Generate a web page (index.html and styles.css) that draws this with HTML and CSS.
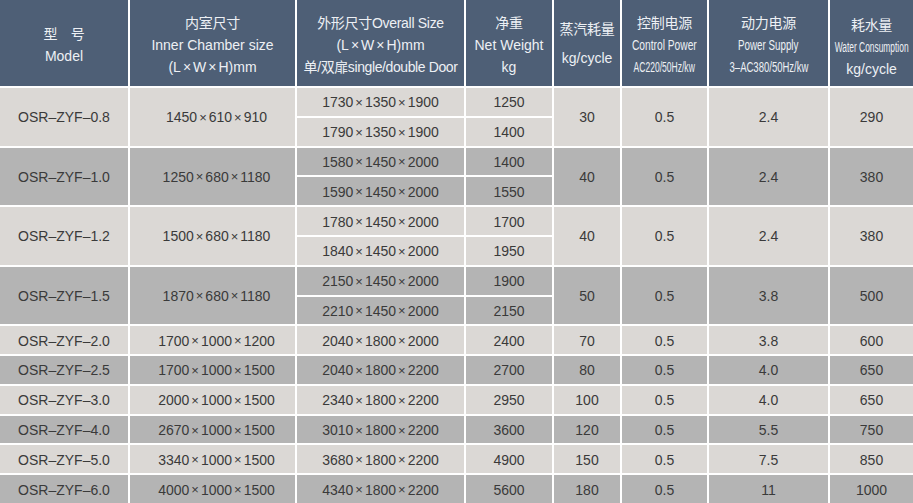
FILE: index.html
```html
<!DOCTYPE html>
<html lang="zh-CN">
<head>
<meta charset="utf-8">
<title>OSR-ZYF 规格参数</title>
<link rel="stylesheet" href="styles.css">
</head>
<body>
<div class="spec">
  <div class="th"><span class="zh">型　号</span><span>Model</span></div>
  <div class="th"><span class="zh">内室尺寸</span><span>Inner Chamber size</span><span>(L<span class="hx">×</span>W<span class="hx">×</span>H)mm</span></div>
  <div class="th"><span class="zh">外形尺寸Overall Size</span><span>(L<span class="hx">×</span>W<span class="hx">×</span>H)mm</span><span class="nw">单/双扉single/double Door</span></div>
  <div class="th"><span class="zh">净重</span><span>Net Weight</span><span>kg</span></div>
  <div class="th th-wide"><span class="zh">蒸汽耗量</span><span>kg/cycle</span></div>
  <div class="th"><span class="zh">控制电源</span><span class="cond c-cp">Control Power</span><span class="cond c-ac">AC220/50Hz/kw</span></div>
  <div class="th"><span class="zh">动力电源</span><span class="cond c-ps">Power Supply</span><span class="cond c-3ac">3–AC380/50Hz/kw</span></div>
  <div class="th th-low"><span class="zh">耗水量</span><span class="cond c-wc">Water Consumption</span><span>kg/cycle</span></div>

  <!-- OSR-ZYF-0.8 -->
  <div class="td light span2">OSR–ZYF–0.8</div>
  <div class="td light span2 inner">1450<span class="x">×</span>610<span class="x">×</span>910</div>
  <div class="td light">1730<span class="x">×</span>1350<span class="x">×</span>1900</div>
  <div class="td light">1250</div>
  <div class="td light span2">30</div>
  <div class="td light span2">0.5</div>
  <div class="td light span2">2.4</div>
  <div class="td light span2">290</div>
  <div class="td light">1790<span class="x">×</span>1350<span class="x">×</span>1900</div>
  <div class="td light">1400</div>

  <!-- OSR-ZYF-1.0 -->
  <div class="td dark span2">OSR–ZYF–1.0</div>
  <div class="td dark span2 inner">1250<span class="x">×</span>680<span class="x">×</span>1180</div>
  <div class="td dark">1580<span class="x">×</span>1450<span class="x">×</span>2000</div>
  <div class="td dark">1400</div>
  <div class="td dark span2">40</div>
  <div class="td dark span2">0.5</div>
  <div class="td dark span2">2.4</div>
  <div class="td dark span2">380</div>
  <div class="td dark">1590<span class="x">×</span>1450<span class="x">×</span>2000</div>
  <div class="td dark">1550</div>

  <!-- OSR-ZYF-1.2 -->
  <div class="td light span2">OSR–ZYF–1.2</div>
  <div class="td light span2 inner">1500<span class="x">×</span>680<span class="x">×</span>1180</div>
  <div class="td light">1780<span class="x">×</span>1450<span class="x">×</span>2000</div>
  <div class="td light">1700</div>
  <div class="td light span2">40</div>
  <div class="td light span2">0.5</div>
  <div class="td light span2">2.4</div>
  <div class="td light span2">380</div>
  <div class="td light">1840<span class="x">×</span>1450<span class="x">×</span>2000</div>
  <div class="td light">1950</div>

  <!-- OSR-ZYF-1.5 -->
  <div class="td dark span2">OSR–ZYF–1.5</div>
  <div class="td dark span2 inner">1870<span class="x">×</span>680<span class="x">×</span>1180</div>
  <div class="td dark">2150<span class="x">×</span>1450<span class="x">×</span>2000</div>
  <div class="td dark">1900</div>
  <div class="td dark span2">50</div>
  <div class="td dark span2">0.5</div>
  <div class="td dark span2">3.8</div>
  <div class="td dark span2">500</div>
  <div class="td dark">2210<span class="x">×</span>1450<span class="x">×</span>2000</div>
  <div class="td dark">2150</div>

  <!-- OSR-ZYF-2.0 -->
  <div class="td light">OSR–ZYF–2.0</div>
  <div class="td light inner">1700<span class="x">×</span>1000<span class="x">×</span>1200</div>
  <div class="td light">2040<span class="x">×</span>1800<span class="x">×</span>2000</div>
  <div class="td light">2400</div>
  <div class="td light">70</div>
  <div class="td light">0.5</div>
  <div class="td light">3.8</div>
  <div class="td light">600</div>

  <!-- OSR-ZYF-2.5 -->
  <div class="td dark">OSR–ZYF–2.5</div>
  <div class="td dark inner">1700<span class="x">×</span>1000<span class="x">×</span>1500</div>
  <div class="td dark">2040<span class="x">×</span>1800<span class="x">×</span>2200</div>
  <div class="td dark">2700</div>
  <div class="td dark">80</div>
  <div class="td dark">0.5</div>
  <div class="td dark">4.0</div>
  <div class="td dark">650</div>

  <!-- OSR-ZYF-3.0 -->
  <div class="td light">OSR–ZYF–3.0</div>
  <div class="td light inner">2000<span class="x">×</span>1000<span class="x">×</span>1500</div>
  <div class="td light">2340<span class="x">×</span>1800<span class="x">×</span>2200</div>
  <div class="td light">2950</div>
  <div class="td light">100</div>
  <div class="td light">0.5</div>
  <div class="td light">4.0</div>
  <div class="td light">650</div>

  <!-- OSR-ZYF-4.0 -->
  <div class="td dark">OSR–ZYF–4.0</div>
  <div class="td dark inner">2670<span class="x">×</span>1000<span class="x">×</span>1500</div>
  <div class="td dark">3010<span class="x">×</span>1800<span class="x">×</span>2200</div>
  <div class="td dark">3600</div>
  <div class="td dark">120</div>
  <div class="td dark">0.5</div>
  <div class="td dark">5.5</div>
  <div class="td dark">750</div>

  <!-- OSR-ZYF-5.0 -->
  <div class="td light">OSR–ZYF–5.0</div>
  <div class="td light inner">3340<span class="x">×</span>1000<span class="x">×</span>1500</div>
  <div class="td light">3680<span class="x">×</span>1800<span class="x">×</span>2200</div>
  <div class="td light">4900</div>
  <div class="td light">150</div>
  <div class="td light">0.5</div>
  <div class="td light">7.5</div>
  <div class="td light">850</div>

  <!-- OSR-ZYF-6.0 -->
  <div class="td dark">OSR–ZYF–6.0</div>
  <div class="td dark inner">4000<span class="x">×</span>1000<span class="x">×</span>1500</div>
  <div class="td dark">4340<span class="x">×</span>1800<span class="x">×</span>2200</div>
  <div class="td dark">5600</div>
  <div class="td dark">180</div>
  <div class="td dark">0.5</div>
  <div class="td dark">11</div>
  <div class="td dark">1000</div>
</div>
</body>
</html>
```
FILE: styles.css
```css
html, body {
  margin: 0;
  padding: 0;
  background: #ffffff;
  overflow: hidden;
}

.spec {
  display: grid;
  grid-template-columns: 128px 165px 167px 86px 66px 85px 119px 83px;
  grid-template-rows: 86px repeat(14, 1fr);
  gap: 2px;
  width: 913px;
  height: 503px;
  background: #ffffff;
  font-family: "Liberation Sans", Arial, "Noto Sans CJK SC", sans-serif;
  font-size: 14px;
  color: #3a3a3a;
}

.th {
  background: #4e5f76;
  color: #edf0f4;
  display: flex;
  flex-direction: column;
  align-items: center;
  justify-content: center;
  line-height: 22px;
  white-space: nowrap;
  padding-top: 3px;
  box-sizing: border-box;
}

.th-wide {
  gap: 7px;
  padding-top: 0;
}

.th-low {
  padding-top: 8px;
}

.zh {
  font-family: "Liberation Sans", "Noto Sans CJK SC", sans-serif;
  letter-spacing: -0.3px;
}

.nw {
  letter-spacing: -0.4px;
}

.hx {
  margin: 0 2px;
}

.cond {
  display: inline-block;
  font-size: 14px;
  white-space: nowrap;
  transform-origin: center;
}

.c-cp { transform: scaleX(0.73); }
.c-ac { transform: scaleX(0.61); }
.c-ps { transform: scaleX(0.70); }
.c-3ac { transform: scaleX(0.68); }
.c-wc { transform: scaleX(0.60); }

.td {
  display: flex;
  align-items: center;
  justify-content: center;
  white-space: nowrap;
  padding-top: 1px;
  box-sizing: border-box;
}

.inner {
  padding-left: 8px;
}

.light {
  background: #dbd8d5;
}

.dark {
  background: #b4b4b4;
}

.span2 {
  grid-row: span 2;
}

.x {
  margin: 0 2px;
  font-size: 13px;
}
```
